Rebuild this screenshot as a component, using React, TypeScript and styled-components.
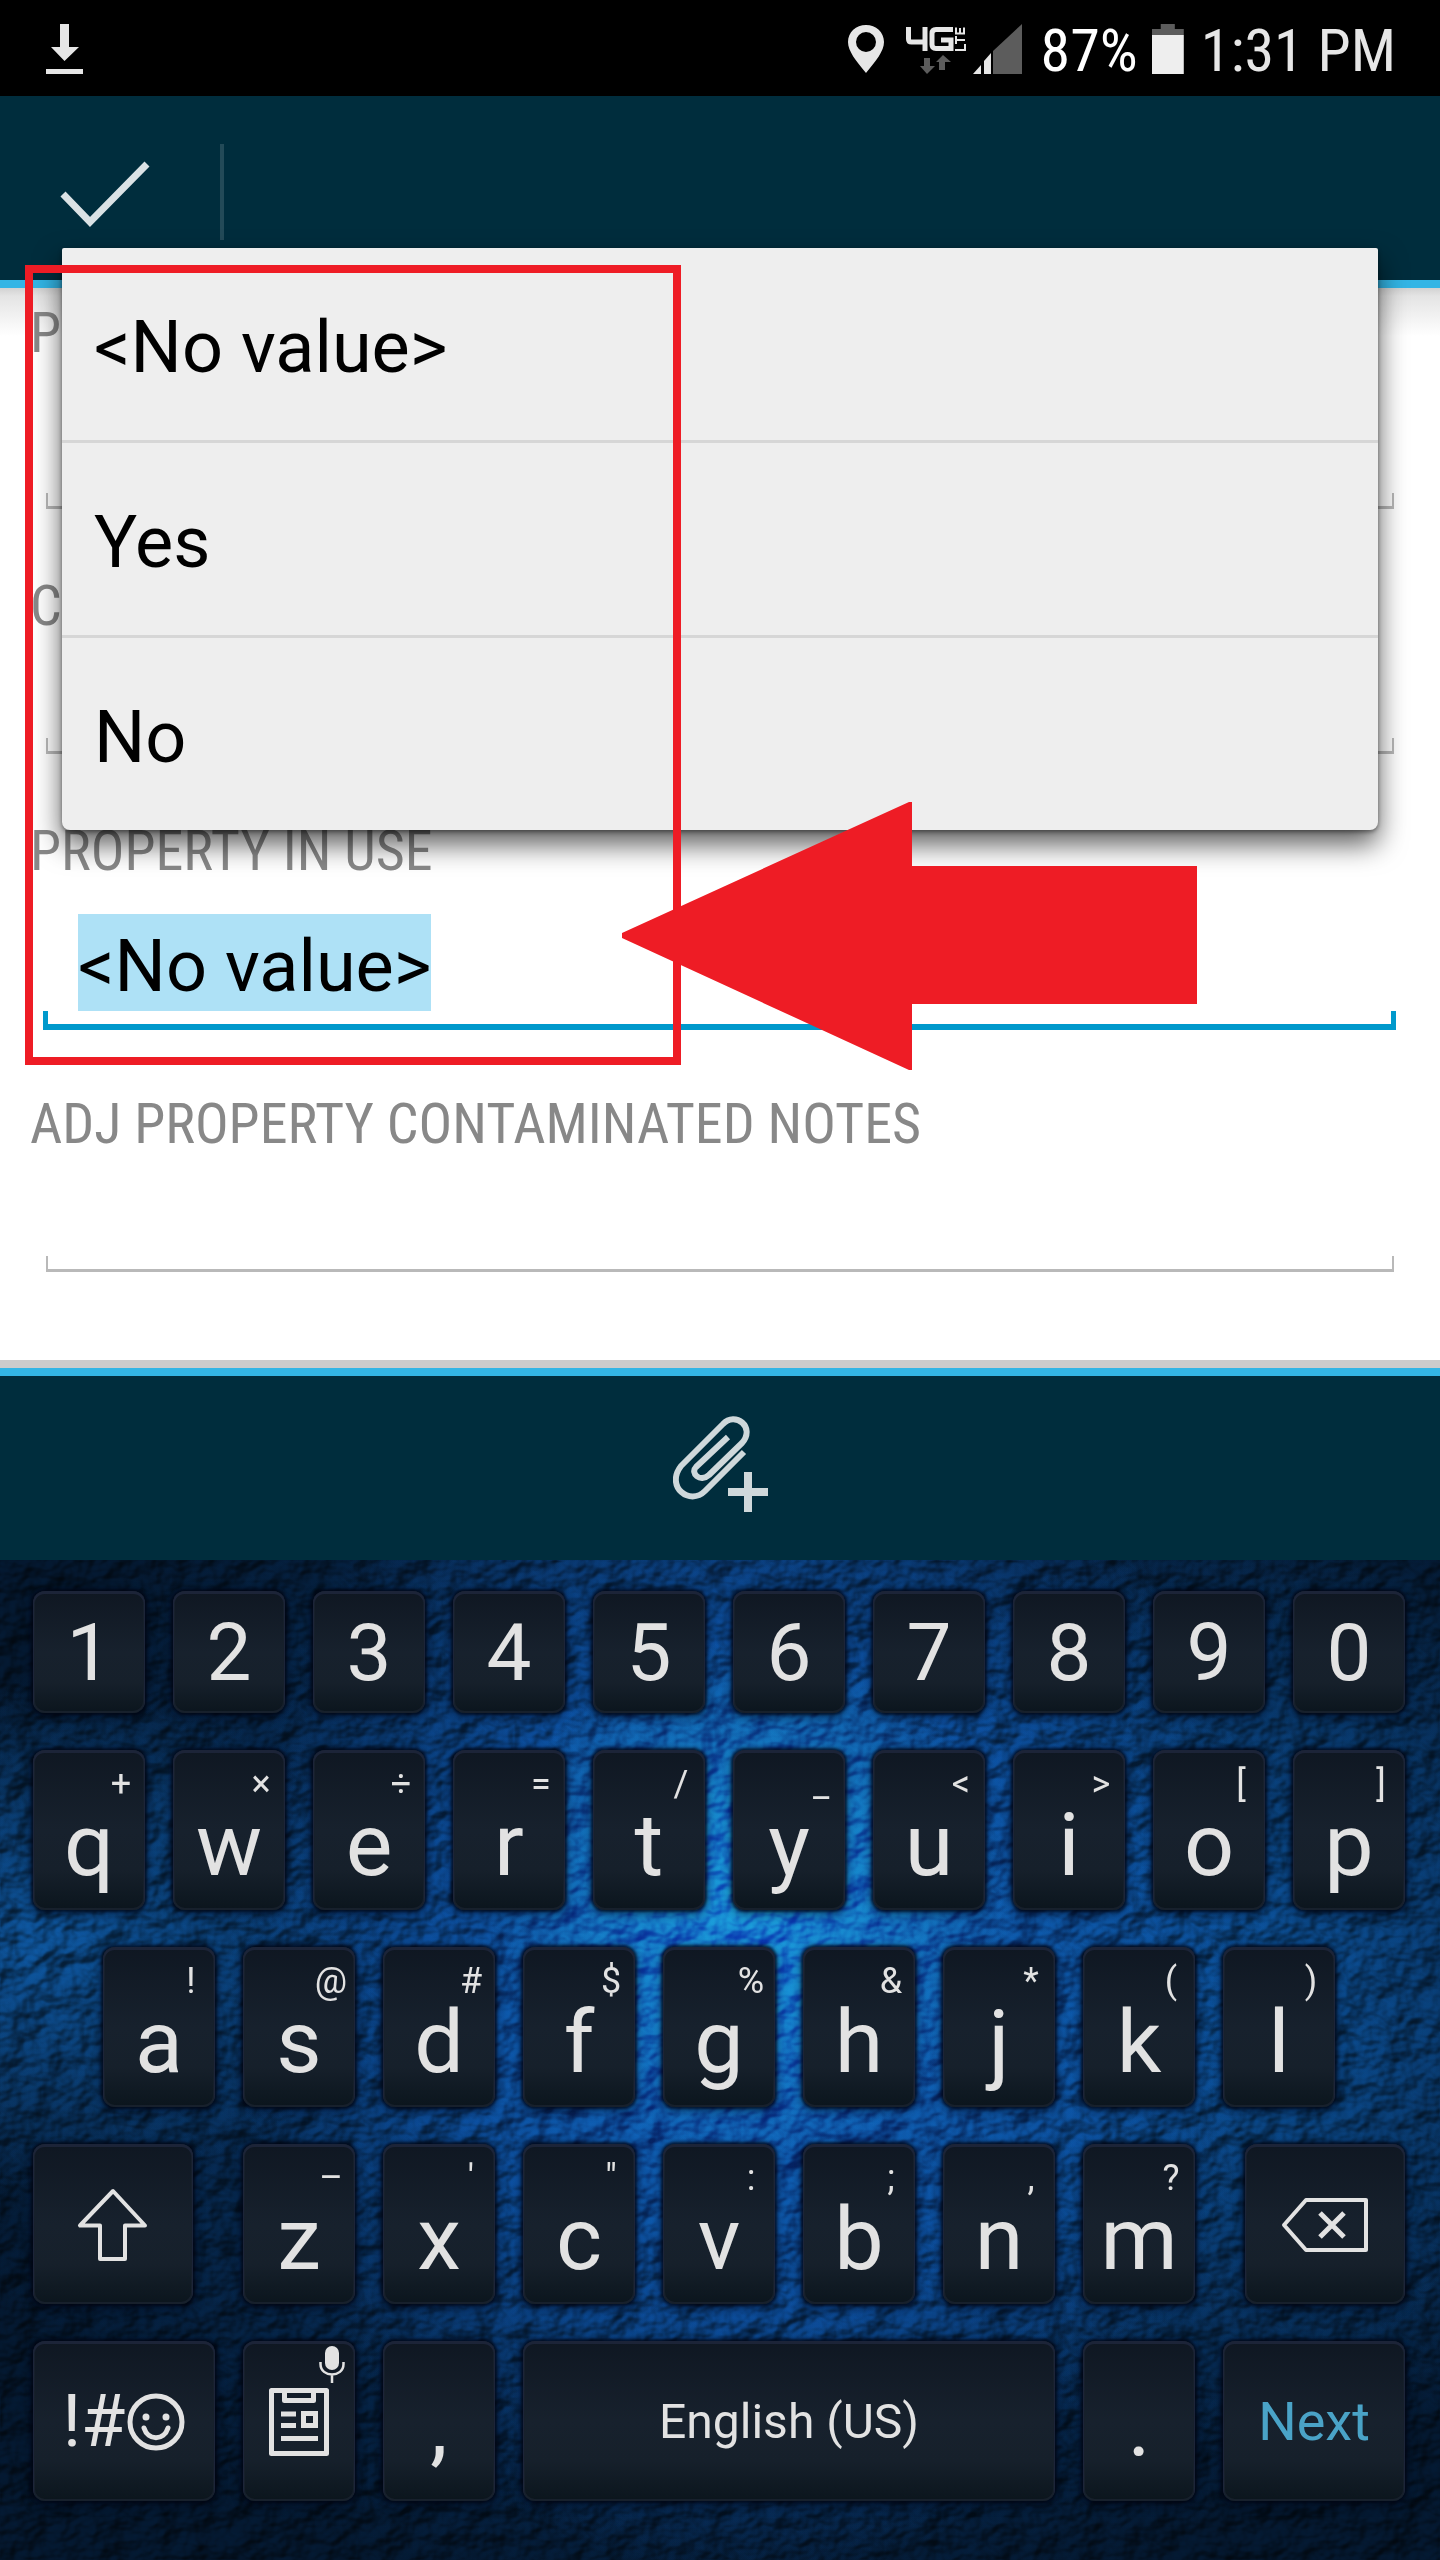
import React from "react";
import styled, { createGlobalStyle, css } from "styled-components";

const GlobalStyle = createGlobalStyle`
  *, *::before, *::after { box-sizing: border-box; }
  body { margin: 0; background: #ffffff; font-family: Roboto, sans-serif; }
  button, input { font-family: inherit; border: 0; padding: 0; margin: 0; background: none; color: inherit; outline: none; }
  svg { display: block; }
`;

const condensed = css`
  font-family: "Roboto Condensed", "Liberation Sans Narrow", Roboto, sans-serif;
`;

const Screen = styled.div`
  position: relative;
  display: flex;
  flex-direction: column;
  min-height: 100vh;
`;

const StatusBar = styled.header`
  display: flex;
  align-items: center;
  justify-content: space-between;
  height: 96px;
  padding: 2px 44px 0 46px;
  background: #000;
  color: #e6e6e6;
`;

const StatusGroup = styled.div`
  display: flex;
  align-items: center;
`;

const StatusText = styled.span<{ $bright?: boolean }>`
  ${condensed}
  font-size: 60px;
  line-height: 72px;
  padding: 4px 0 0;
  margin-left: 17px;
  white-space: nowrap;
  color: ${(p) => (p.$bright ? "#ffffff" : "#e6e6e6")};
`;

const ActionBar = styled.div`
  display: flex;
  align-items: center;
  height: 192px;
  padding-top: 8px;
  background: #002d3d;
  border-bottom: 8px solid #33b5e5;
`;

const DoneButton = styled.button`
  display: flex;
  align-items: center;
  height: 96px;
  padding: 4px 68px 0 60px;
  border-right: 4px solid #234a58;
`;

const Form = styled.form`
  display: flex;
  flex-direction: column;
  padding: 12px 44px 88px 30px;
  background: linear-gradient(#d2d2d2, #e4e4e4 8px, #ffffff 48px);
`;

const Field = styled.div<{ $focused?: boolean }>`
  display: flex;
  flex-direction: column;
  align-items: flex-start;
  margin-bottom: ${(p) => (p.$focused ? "61px" : "64px")};
  &:last-child { margin-bottom: 0; }
`;

const Label = styled.label`
  ${condensed}
  font-size: 56px;
  line-height: 66px;
  margin-bottom: 30px;
  color: #888888;
`;

const Input = styled.input<{ $tall?: boolean; $selected?: boolean }>`
  height: ${(p) => (p.$tall ? "97px" : "69px")};
  margin-left: 48px;
  padding-top: 8px;
  font-size: ${(p) => (p.$tall ? "72px" : "56px")};
  color: #000;
  ${(p) => p.$selected && css`
    field-sizing: content;
    background: #aee1f6;
  `}
`;

const Underline = styled.div<{ $focused?: boolean }>`
  align-self: stretch;
  height: ${(p) => (p.$focused ? "19px" : "16px")};
  margin: ${(p) => (p.$focused ? "0 0 0 13px" : "0 2px 0 16px")};
  border: solid ${(p) => (p.$focused ? "#0099cc" : "#b9b9b9")};
  border-width: ${(p) => (p.$focused ? "0 5px 6px" : "0 2px 3px")};
`;

const AttachBar = styled.div`
  display: flex;
  height: 200px;
  border-top: 8px solid #cccccc;
  background: #002d3d;
`;

const AttachInner = styled.div`
  flex: 1;
  display: flex;
  justify-content: center;
  align-items: center;
  border-top: 8px solid #33b5e5;
`;

const AttachButton = styled.button`
  padding: 0 0 6px 4px;
`;

const Menu = styled.div`
  position: absolute;
  z-index: 2;
  top: 248px;
  left: 62px;
  right: 62px;
  display: flex;
  flex-direction: column;
  background: #eeeeee;
  border-radius: 2px 2px 8px 8px;
  box-shadow: 0 14px 28px rgba(0, 0, 0, 0.65), 0 2px 4px rgba(0, 0, 0, 0.4);
`;

const MenuItem = styled.button`
  padding: 8px 32px 0;
  font-size: 72px;
  line-height: 184px;
  text-align: left;
  color: #000;
  & + & { border-top: 3px solid #d6d6d6; }
`;

const Callout = styled.div`
  position: absolute;
  z-index: 3;
  top: 265px;
  left: 25px;
  width: 656px;
  height: 800px;
  border: 8px solid #ee1c25;
  pointer-events: none;
`;

const CalloutArrow = styled.svg`
  position: absolute;
  z-index: 3;
  top: 802px;
  left: 622px;
  pointer-events: none;
`;

const Keyboard = styled.section`
  position: relative;
  isolation: isolate;
  flex: 1;
  display: flex;
  flex-direction: column;
  gap: 37px;
  padding: 31px 35px 59px 33px;
  background:
    radial-gradient(ellipse 260px 260px at 52% 34%, rgba(24, 140, 216, 0.8), transparent),
    radial-gradient(ellipse 520px 620px at 52% 40%, rgba(15, 92, 188, 0.95), transparent),
    radial-gradient(ellipse 340px 260px at 3% 38%, rgba(12, 76, 140, 0.9), transparent),
    radial-gradient(ellipse 420px 480px at 88% 42%, rgba(10, 72, 136, 0.85), transparent),
    radial-gradient(ellipse 860px 620px at 52% 44%, #083c76, #031428);
`;

const Leather = styled.svg`
  position: absolute;
  z-index: -1;
  inset: 0;
  width: 100%;
  height: 100%;
  mix-blend-mode: overlay;
  opacity: 0.55;
`;

const KeyRow = styled.div<{ $inset?: boolean }>`
  display: flex;
  gap: 28px;
  padding: ${(p) => (p.$inset ? "0 70px" : "0")};
`;

const Key = styled.button<{ $size?: number; $short?: boolean; $gap?: "left" | "right"; }>`
  position: relative;
  flex: ${(p) => p.$size ?? 112} 1 0;
  min-width: 0;
  height: ${(p) => (p.$short ? "122px" : "160px")};
  margin-left: ${(p) => (p.$gap === "left" ? "22px" : "0")};
  margin-right: ${(p) => (p.$gap === "right" ? "22px" : "0")};
  padding-top: 2px;
  display: flex;
  align-items: center;
  justify-content: center;
  gap: 2px;
  border-radius: 12px;
  background: linear-gradient(#0f1722, #17212d 50%, #16202b 75%, #0b151d);
  box-shadow:
    inset 0 2px 0 1px #1c2438,
    inset 0 0 0 2px #17202c,
    0 0 3px 2px rgba(0, 6, 20, 0.75),
    0 3px 8px 3px rgba(0, 6, 20, 0.35);
  color: #e2e2e2;
`;

const Digit = styled.span`
  font-size: 80px;
  line-height: 96px;
`;

const Letter = styled.span<{ $raised?: boolean }>`
  align-self: flex-end;
  font-size: 88px;
  line-height: 88px;
  padding-bottom: ${(p) => (p.$raised ? "32px" : "21px")};
`;

const Hint = styled.span`
  position: absolute;
  top: 15px;
  right: 0;
  width: 48px;
  font-size: 36px;
  line-height: 38px;
  text-align: center;
`;

const Symbols = styled.span`
  font-size: 72px;
  line-height: 84px;
`;

const SpaceLabel = styled.span`
  font-size: 48px;
  line-height: 56px;
`;

const NextLabel = styled.span`
  font-size: 54px;
  line-height: 62px;
  color: #4aa3c7;
`;

const MicHint = styled.span`
  position: absolute;
  top: 5px;
  right: 10px;
`;

const digits = ["1", "2", "3", "4", "5", "6", "7", "8", "9", "0"];
type LetterKey = [string, string];
const topRow: LetterKey[] = [["q", "+"], ["w", "×"], ["e", "÷"], ["r", "="], ["t", "/"], ["y", "_"], ["u", "<"], ["i", ">"], ["o", "["], ["p", "]"]];
const homeRow: LetterKey[] = [["a", "!"], ["s", "@"], ["d", "#"], ["f", "$"], ["g", "%"], ["h", "&"], ["j", "*"], ["k", "("], ["l", ")"]];
const bottomRow: LetterKey[] = [["z", "–"], ["x", "'"], ["c", "\""], ["v", ":"], ["b", ";"], ["n", ","], ["m", "?"]];

const letters = (keys: LetterKey[]) =>
  keys.map(([letter, hint]) => (
    <Key key={letter} type="button">
      <Hint>{hint}</Hint>
      <Letter>{letter}</Letter>
    </Key>
  ));

const DownloadIcon = () => (
  <svg width="37" height="50" viewBox="0 0 37 50" fill="#e6e6e6">
    <path d="M14 0h9v23h10L18.500 37 5 23h9zM0 45h37v5H0z" />
  </svg>
);

const StatusIcons = () => (
  <svg width="176" height="50" viewBox="0 0 176 50" fill="#e6e6e6">
    <path fillRule="evenodd" d="M18 1C8 1 0 8 0 18c0 9 8 19 18 31 10-12 18-22 18-31C36 8 28 1 18 1zm0 7a10 10 0 1 1 0 20 10 10 0 0 1 0-20z" />
    <g fill="none" stroke="#e6e6e6" strokeWidth="5">
      <path d="M60.500 3v12q0 3 3 3H77M77 3v24" />
      <path d="M105 5.500H88q-4 0-4 4v11q0 4 4 4h15V16H93" />
    </g>
    <g fill="none" stroke="#e6e6e6" strokeWidth="2">
      <path d="M107 26h10v-6M109 16h8M108 20v-8M107 9.500h10M108 9.500V3.500M112 9.500V4M116 9.500V3.500" />
    </g>
    <path fill="#5c5c5c" d="M76 34h6v8h5l-8 8-7-8h4zM91 46h6v-8h6l-8-7-7 7h3z" />
    <path d="M125 50l8-9v9zM136 50V37l7-8v21z" />
    <path fill="#5c5c5c" d="M145 50V27l29-27v50z" />
  </svg>
);

const BatteryIcon = styled.span`
  display: block;
  width: 32px;
  height: 50px;
  margin: 0 0 0 14px;
  background: linear-gradient(#5c5c5c 11px, #eeeeee 11px);
  clip-path: polygon(28% 0, 72% 0, 72% 10%, 100% 10%, 100% 100%, 0 100%, 0 10%, 28% 10%);
`;

const CheckIcon = () => (
  <svg width="92" height="68" viewBox="0 0 92 68" fill="none" stroke="#dbe2e5" strokeWidth="7">
    <path d="M3 34l27 28L87 4" />
  </svg>
);

const ClipIcon = () => (
  <svg width="98" height="100" viewBox="0 0 98 100" fill="none" stroke="#cfd8db">
    <path strokeWidth="6" strokeLinejoin="round" d="M71 37L32 76C17 91-8 72 8 51L50 9C62-4 83 12 69 28L36 60C27 68 17 58 23 52L55 22" />
    <path strokeWidth="8" d="M75 57v40M55 77h40" />
  </svg>
);

const ShiftIcon = () => (
  <svg width="72" height="74" viewBox="0 0 72 74" fill="none" stroke="#e2e2e2" strokeWidth="4" strokeLinejoin="round">
    <path d="M36 3L3 37.500h20V71h25V37.500h20z" />
  </svg>
);

const BackspaceIcon = () => (
  <svg width="88" height="56" viewBox="0 0 88 56" fill="none" stroke="#e2e2e2" strokeWidth="4" strokeLinejoin="round">
    <path d="M25 3h60v50H25L3 28z" />
    <path strokeWidth="5" d="M39 16l24 24M63 16L39 40" />
  </svg>
);

const SmileIcon = () => (
  <svg width="58" height="58" viewBox="0 0 58 58" fill="none" stroke="#e2e2e2" strokeWidth="5" strokeLinecap="round">
    <circle cx="29" cy="29" r="26" />
    <path d="M17 35c4 13 20 13 24 0" />
    <circle cx="19" cy="24" r="3.500" fill="#e2e2e2" stroke="none" />
    <circle cx="39" cy="24" r="3.500" fill="#e2e2e2" stroke="none" />
  </svg>
);

const ClipboardIcon = () => (
  <svg width="60" height="68" viewBox="0 0 60 68" fill="none" stroke="#e2e2e2" strokeWidth="5" strokeLinejoin="round">
    <rect x="2.500" y="2.500" width="55" height="63" />
    <path d="M15.500 4v8.500h29V4" />
    <path d="M12 26h15M12 37.500h15M12 50.500h37" />
    <path strokeLinejoin="miter" d="M34.500 25.500h12v12h-12z" />
  </svg>
);

const MicIcon = () => (
  <svg width="26" height="37" viewBox="0 0 26 37" fill="none" stroke="#e2e2e2" strokeWidth="2.500">
    <rect x="6" y="0" width="14" height="24" rx="7" fill="#e2e2e2" stroke="none" />
    <path d="M1.500 16v2c0 14 23 14 23 0v-2M13 28v9" />
  </svg>
);

export default function App() {
  return (
    <>
      <GlobalStyle />
      <Screen>
        <StatusBar>
          <DownloadIcon />
          <StatusGroup>
            <StatusIcons />
            <StatusText $bright>87%</StatusText>
            <BatteryIcon />
            <StatusText>1:31 PM</StatusText>
          </StatusGroup>
        </StatusBar>

        <ActionBar>
          <DoneButton type="button" aria-label="Done"><CheckIcon /></DoneButton>
        </ActionBar>

        <Form>
          <Field>
            <Label htmlFor="field-p">P</Label>
            <Input id="field-p" $tall />
            <Underline />
          </Field>
          <Field>
            <Label htmlFor="field-c">C</Label>
            <Input id="field-c" />
            <Underline />
          </Field>
          <Field $focused>
            <Label htmlFor="in-use">PROPERTY IN USE</Label>
            <Input id="in-use" $tall $selected defaultValue="<No value>" />
            <Underline $focused />
          </Field>
          <Field>
            <Label htmlFor="notes">ADJ PROPERTY CONTAMINATED NOTES</Label>
            <Input id="notes" />
            <Underline />
          </Field>
        </Form>

        <AttachBar>
          <AttachInner>
            <AttachButton type="button" aria-label="Add attachment"><ClipIcon /></AttachButton>
          </AttachInner>
        </AttachBar>

        <Keyboard>
          <Leather aria-hidden="true">
            <filter id="leather" x="0" y="0" width="100%" height="100%" colorInterpolationFilters="sRGB">
              <feTurbulence type="fractalNoise" baseFrequency="0.035 0.045" numOctaves="3" seed="8" />
              <feDiffuseLighting surfaceScale="9" diffuseConstant="0.75" lightingColor="#ffffff">
                <feDistantLight azimuth="225" elevation="45" />
              </feDiffuseLighting>
            </filter>
            <rect width="100%" height="100%" filter="url(#leather)" />
          </Leather>
          <KeyRow>
            {digits.map((d) => (
              <Key key={d} type="button" $short><Digit>{d}</Digit></Key>
            ))}
          </KeyRow>
          <KeyRow>{letters(topRow)}</KeyRow>
          <KeyRow $inset>{letters(homeRow)}</KeyRow>
          <KeyRow>
            <Key type="button" $size={160} $gap="right" aria-label="Shift"><ShiftIcon /></Key>
            {letters(bottomRow)}
            <Key type="button" $size={160} $gap="left" aria-label="Backspace"><BackspaceIcon /></Key>
          </KeyRow>
          <KeyRow>
            <Key type="button" $size={182}><Symbols>!#</Symbols><SmileIcon /></Key>
            <Key type="button" aria-label="Clipboard">
              <MicHint><MicIcon /></MicHint>
              <ClipboardIcon />
            </Key>
            <Key type="button"><Letter $raised>,</Letter></Key>
            <Key type="button" $size={532}><SpaceLabel>English (US)</SpaceLabel></Key>
            <Key type="button"><Letter $raised>.</Letter></Key>
            <Key type="button" $size={182}><NextLabel>Next</NextLabel></Key>
          </KeyRow>
        </Keyboard>

        <Menu role="menu">
          <MenuItem type="button" role="menuitem">&lt;No value&gt;</MenuItem>
          <MenuItem type="button" role="menuitem">Yes</MenuItem>
          <MenuItem type="button" role="menuitem">No</MenuItem>
        </Menu>
        <Callout />
        <CalloutArrow width="576" height="268" viewBox="0 0 576 268" fill="#ee1c25">
          <path d="M0 131L287 0h3v64h285v138H290v66h-3L0 136z" />
        </CalloutArrow>
      </Screen>
    </>
  );
}
